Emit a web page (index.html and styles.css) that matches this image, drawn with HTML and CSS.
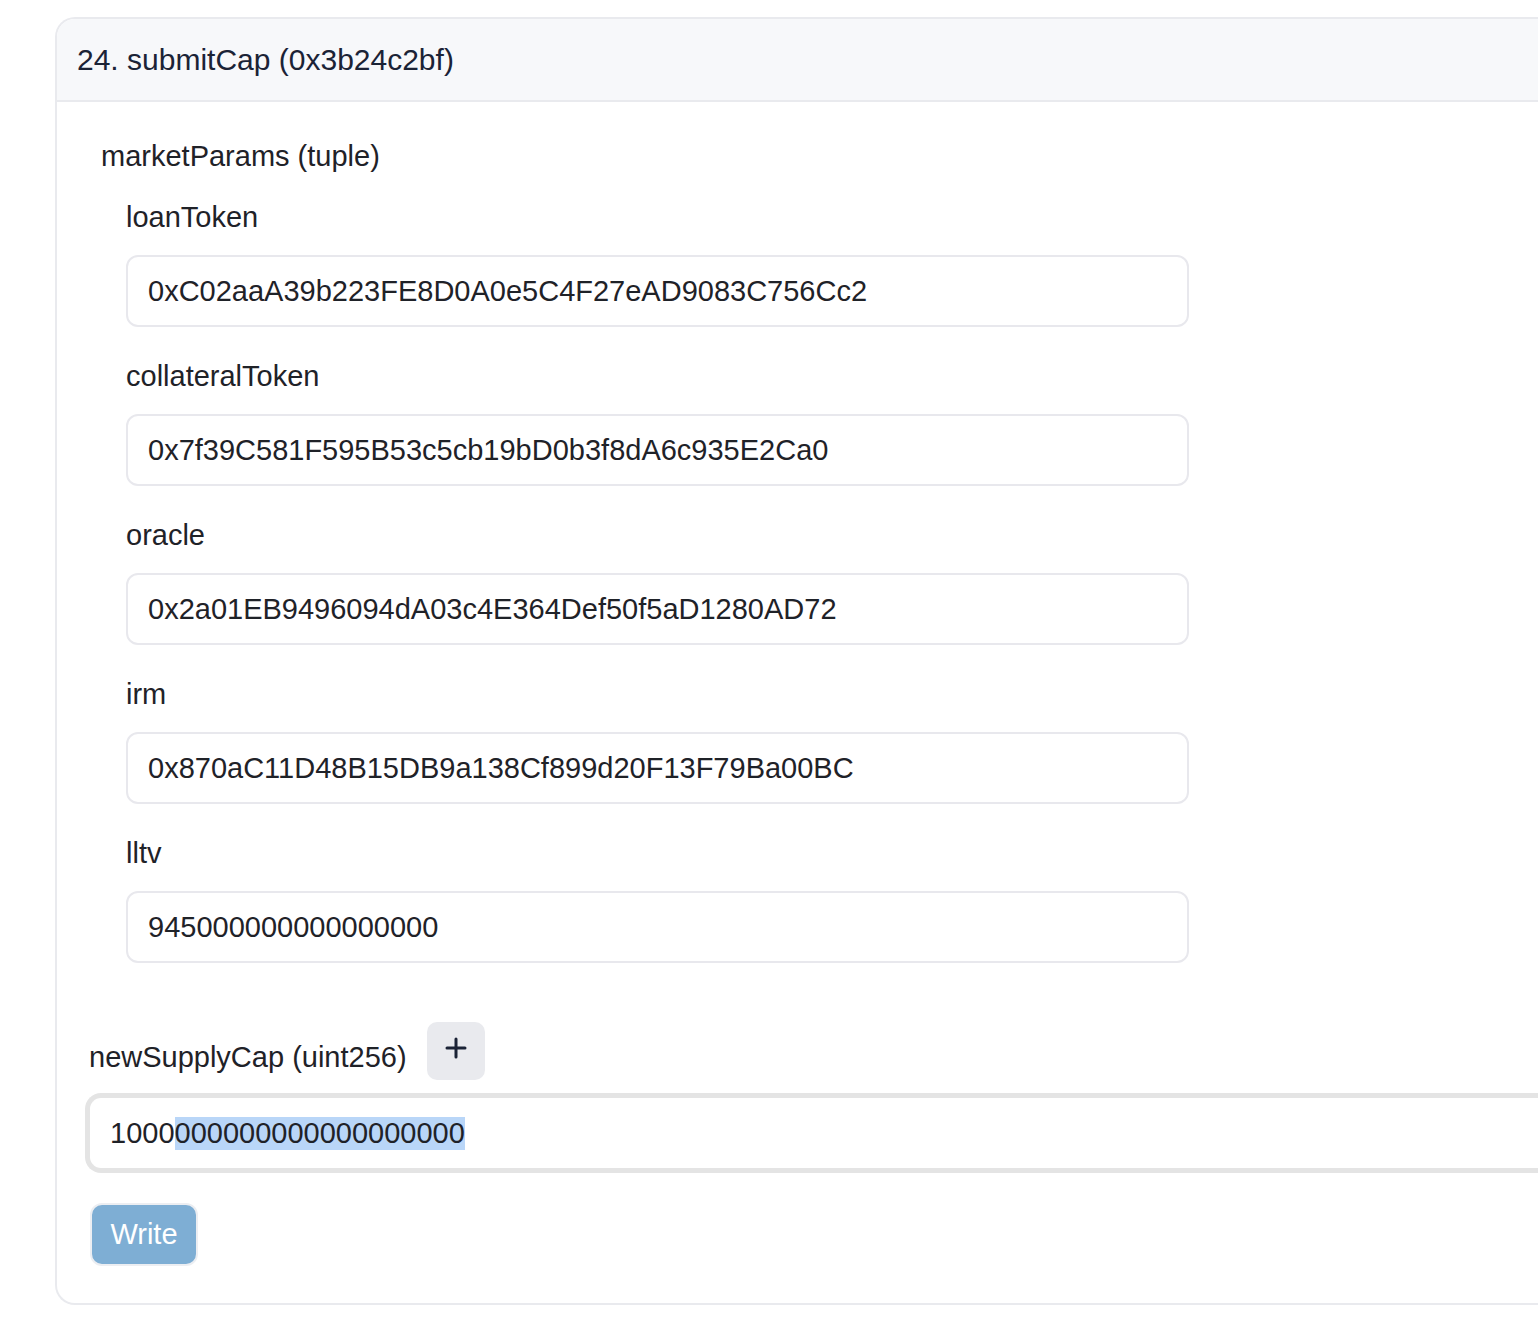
FILE: index.html
```html
<!DOCTYPE html>
<html lang="en">
<head>
<meta charset="utf-8">
<title>submitCap</title>
<link rel="stylesheet" href="styles.css">
</head>
<body>
<div class="page">
  <section class="card">
    <header class="card-header">24. submitCap (0x3b24c2bf)</header>
    <div class="card-body">
      <div class="tuple">
        <div class="tuple-label">marketParams (tuple)</div>
        <div class="tuple-fields">
          <div class="field">
            <label class="field-label">loanToken</label>
            <div class="input">0xC02aaA39b223FE8D0A0e5C4F27eAD9083C756Cc2</div>
          </div>
          <div class="field">
            <label class="field-label">collateralToken</label>
            <div class="input">0x7f39C581F595B53c5cb19bD0b3f8dA6c935E2Ca0</div>
          </div>
          <div class="field">
            <label class="field-label">oracle</label>
            <div class="input">0x2a01EB9496094dA03c4E364Def50f5aD1280AD72</div>
          </div>
          <div class="field">
            <label class="field-label">irm</label>
            <div class="input">0x870aC11D48B15DB9a138Cf899d20F13F79Ba00BC</div>
          </div>
          <div class="field">
            <label class="field-label">lltv</label>
            <div class="input">945000000000000000</div>
          </div>
        </div>
      </div>
      <div class="param">
        <div class="param-head">
          <span class="param-label">newSupplyCap (uint256)</span>
          <button class="plus-btn" type="button" aria-label="Add">
            <svg width="22" height="22" viewBox="0 0 22 22" fill="none" stroke="#1b2336" stroke-width="3" stroke-linecap="round"><path d="M11 2v18M2 11h18"/></svg>
          </button>
        </div>
        <div class="input input-focus">1000<span class="sel">000000000000000000</span></div>
      </div>
      <button class="write-btn" type="button">Write</button>
    </div>
  </section>
</div>
</body>
</html>
```
FILE: styles.css
```css
html, body {
  margin: 0;
  padding: 0;
  overflow: hidden;
  background: #ffffff;
}
body {
  font-family: "Liberation Sans", Arial, Helvetica, sans-serif;
  color: #1f2228;
}
.page {
  padding: 17px 0 0 55px;
}
.card {
  border: 2px solid #e9eaee;
  border-right: none;
  border-radius: 20px 0 0 20px;
  overflow: hidden;
  background: #fff;
}
.card-header {
  background: #f7f8fa;
  border-bottom: 2px solid #e9eaee;
  height: 83px;
  box-sizing: border-box;
  padding: 0 20px;
  display: flex;
  align-items: center;
  font-size: 30px;
  color: #1b2336;
}
.card-body {
  padding: 33px 0 37px 28px;
}
.tuple {
  padding-left: 16px;
}
.tuple-label {
  font-size: 29px;
  line-height: 42px;
}
.tuple-fields {
  padding-left: 25px;
  padding-top: 19px;
  display: flex;
  flex-direction: column;
  gap: 28px;
}
.field {
  display: flex;
  flex-direction: column;
  gap: 17px;
}
.field-label {
  font-size: 29px;
  line-height: 42px;
}
.input {
  width: 1063px;
  height: 72px;
  box-sizing: border-box;
  border: 2px solid #e8e8ed;
  border-radius: 12px;
  padding: 0 20px;
  display: flex;
  align-items: center;
  font-size: 29px;
  color: #1f2228;
  white-space: nowrap;
}
.param {
  margin-top: 59px;
}
.param-head {
  display: flex;
  align-items: flex-end;
  gap: 20px;
  padding-left: 4px;
}
.param-label {
  font-size: 29px;
  line-height: 42px;
  margin-bottom: 2px;
}
.plus-btn {
  width: 58px;
  height: 58px;
  border: none;
  border-radius: 10px;
  background: #e9eaee;
  display: flex;
  align-items: center;
  justify-content: center;
  padding: 0;
}
.plus-btn svg {
  margin-top: -6px;
}
.input-focus {
  margin-top: 13px;
  width: auto;
  height: 80px;
  border: 5px solid #e4e4e4;
  border-right: none;
  border-radius: 16px 0 0 16px;
  padding: 0 20px;
}
.sel {
  background: #b9d6f8;
}
.write-btn {
  margin-top: 30px;
  margin-left: 5px;
  width: 108px;
  height: 63px;
  border: 2px solid #eceef2;
  border-radius: 12px;
  background: #7eaed4;
  color: #ffffff;
  font-family: "Liberation Sans", Arial, Helvetica, sans-serif;
  font-size: 29px;
  padding: 0;
  display: block;
}
```
